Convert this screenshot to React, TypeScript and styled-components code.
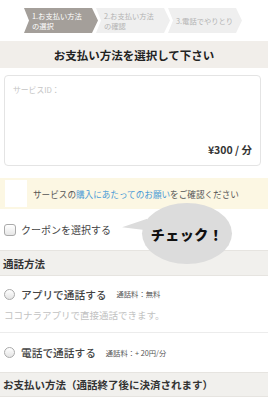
import React from "react";
import styled, { createGlobalStyle } from "styled-components";

const Global = createGlobalStyle`
  html, body { margin: 0; padding: 0; background: #fff; }
  body { font-family: "Noto Sans CJK JP", "Noto Sans", sans-serif; color: #333; }
`;

const Page = styled.div`
  width: 268px;
  display: flex;
  flex-direction: column;
`;

const Steps = styled.div`
  display: flex;
  padding: 8px 0 0 24px;
  height: 25px;
`;

const Step = styled.div<{ $active?: boolean; $first?: boolean }>`
  width: 74px;
  height: 25px;
  margin-left: ${(p) => (p.$first ? "0" : "-2px")};
  box-sizing: border-box;
  padding-left: 8px;
  display: flex;
  flex-direction: column;
  justify-content: center;
  background: ${(p) => (p.$active ? "#a49f9a" : "#efefef")};
  color: ${(p) => (p.$active ? "#fff" : "#b3b3b3")};
  font-size: 7.3px;
  line-height: 10px;
  clip-path: polygon(0 0, calc(100% - 6px) 0, 100% 50%, calc(100% - 6px) 100%, 0 100%, 5px 50%);
`;

const TitleBar = styled.div`
  margin-top: 8px;
  height: 27px;
  background: #f1eeea;
  display: flex;
  align-items: center;
  justify-content: center;
  font-size: 11.5px;
  font-weight: 700;
  color: #222;
`;

const ServiceBox = styled.div`
  margin: 7px 0 0 4px;
  width: 257px;
  height: 91px;
  box-sizing: border-box;
  border: 1px solid #e4e4e4;
  border-radius: 4px;
  display: flex;
  flex-direction: column;
  justify-content: space-between;
  padding: 8px;
`;

const ServiceLabel = styled.div`
  font-size: 7.8px;
  color: #c4c4c4;
`;

const Price = styled.div`
  align-self: flex-end;
  font-size: 10.5px;
  font-weight: 600;
  color: #333;
`;

const Notice = styled.div`
  margin-top: 12px;
  height: 31px;
  background: #fcf7e3;
  display: flex;
  align-items: center;
  padding-left: 5px;
  gap: 6px;
  font-size: 8.6px;
  color: #555;
`;

const NoticeThumb = styled.div`
  width: 22px;
  height: 27px;
  background: #fff;
`;

const NoticeLink = styled.span`
  color: #4a9ad6;
`;

const CouponRow = styled.div`
  position: relative;
  z-index: 2;
  height: 41px;
  display: flex;
  align-items: center;
  padding-left: 4px;
  gap: 5px;
  font-size: 10px;
  color: #444;
`;

const Checkbox = styled.span`
  width: 10px;
  height: 10px;
  border: 1px solid #aaa;
  border-radius: 3px;
  background: linear-gradient(#fff, #e6e6e6);
`;

const Bubble = styled.div`
  position: absolute;
  left: 142px;
  top: -6px;
  width: 90px;
  height: 61px;
  border-radius: 50%;
  background: #dcdcdc;
  display: flex;
  align-items: center;
  justify-content: center;
  font-size: 14px;
  font-weight: 900;
  letter-spacing: 0.5px;
  color: #111;
  &::before {
    content: "";
    position: absolute;
    left: -20px;
    top: 17px;
    border-style: solid;
    border-width: 6px 26px 6px 0;
    border-color: transparent #dcdcdc transparent transparent;
    transform: rotate(-6deg);
  }
`;

const SectionHeader = styled.div<{ $h: number }>`
  height: ${(p) => p.$h}px;
  box-sizing: border-box;
  background: #f1f0ed;
  border-top: 1px solid #e6e4e0;
  border-bottom: 1px solid #e6e4e0;
  display: flex;
  align-items: center;
  padding-left: 3px;
  font-size: 10.5px;
  font-weight: 700;
  color: #333;
`;

const OptionRow = styled.div<{ $h: number; $border?: boolean }>`
  height: ${(p) => p.$h}px;
  box-sizing: border-box;
  border-bottom: ${(p) => (p.$border ? "1px solid #ececec" : "none")};
  display: flex;
  flex-direction: column;
  justify-content: center;
  padding-left: 4px;
  gap: 6px;
`;

const OptionLine = styled.div`
  display: flex;
  align-items: center;
  gap: 6px;
  font-size: 10.7px;
  font-weight: 500;
  color: #444;
`;

const Radio = styled.span`
  width: 11px;
  height: 11px;
  box-sizing: border-box;
  border: 1px solid #aaa;
  border-radius: 50%;
  background: linear-gradient(#fff, #e4e4e4);
`;

const Fee = styled.span`
  margin-left: 4px;
  font-size: 7.3px;
  font-weight: 400;
  color: #555;
`;

const SubText = styled.div`
  font-size: 9.5px;
  color: #c2c2c2;
`;

export default function App() {
  return (
    <Page>
      <Global />
      <Steps>
        <Step $active $first>
          <span>1.お支払い方法</span>
          <span>の選択</span>
        </Step>
        <Step>
          <span>2.お支払い方法</span>
          <span>の確認</span>
        </Step>
        <Step>
          <span>3.電話でやりとり</span>
        </Step>
      </Steps>
      <TitleBar>お支払い方法を選択して下さい</TitleBar>
      <ServiceBox>
        <ServiceLabel>サービスID：</ServiceLabel>
        <Price>¥300 / 分</Price>
      </ServiceBox>
      <Notice>
        <NoticeThumb />
        <span>
          サービスの<NoticeLink>購入にあたってのお願い</NoticeLink>をご確認ください
        </span>
      </Notice>
      <CouponRow>
        <Checkbox />
        <span>クーポンを選択する</span>
        <Bubble>チェック！</Bubble>
      </CouponRow>
      <SectionHeader $h={26}>通話方法</SectionHeader>
      <OptionRow $h={57} $border>
        <OptionLine>
          <Radio />
          <span>アプリで通話する</span>
          <Fee>通話料：無料</Fee>
        </OptionLine>
        <SubText>ココナラアプリで直接通話できます。</SubText>
      </OptionRow>
      <OptionRow $h={39}>
        <OptionLine>
          <Radio />
          <span>電話で通話する</span>
          <Fee>通話料：+ 20円/分</Fee>
        </OptionLine>
      </OptionRow>
      <SectionHeader $h={25}>お支払い方法（通話終了後に決済されます）</SectionHeader>
    </Page>
  );
}
